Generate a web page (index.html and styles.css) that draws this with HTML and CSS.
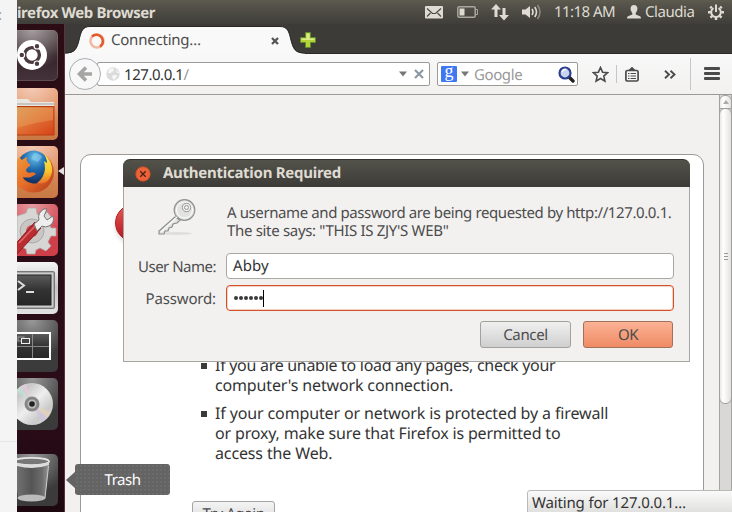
FILE: index.html
```
<!DOCTYPE html>
<html lang="en">
<head>
<meta charset="utf-8">
<title>Authentication Required</title>
<link rel="stylesheet" href="styles.css">
</head>
<body>
<div class="screen">
  <aside class="margin"><span class="colon">:</span></aside>

  <header class="panel">
    <span class="app-title"><span class="t t-title">irefox Web Browser</span></span>
    <svg class="i-mail" width="18" height="13" viewBox="0 0 18 13"><rect width="18" height="12.500" rx="1" fill="#dfdbd2"/><path d="M2 2.500l5.500 5h3l5.500-5M2 10.500l3.500-3.500M16 10.500l-3.500-3.500" fill="none" stroke="#4a4943" stroke-width="1.200"/></svg>
    <svg class="i-batt" width="21" height="12" viewBox="0 0 21 12"><rect x=".8" y=".8" width="17.400" height="10.400" rx="1.500" fill="none" stroke="#aaa79e" stroke-width="1.500"/><path d="M19 3.500h1.500v5H19" fill="none" stroke="#aaa79e"/><rect x="2.500" y="2.500" width="5" height="7" fill="#dfdbd2"/></svg>
    <svg class="i-net" width="18" height="17" viewBox="0 0 18 17"><path d="M5 0l5 5.500H6.500V13h-3V5.500H0z M13 16.500l-5-5.500h3.500V4h3v7H18z" fill="#dfdbd2"/></svg>
    <svg class="i-vol" width="20" height="16" viewBox="0 0 20 16"><path d="M0 5.500h3.500L8 2v12l-4.500-3.500H0z" fill="#dfdbd2"/><path d="M10 5q2 3 0 6M12.700 3q3.600 5 0 10" fill="none" stroke="#dfdbd2" stroke-width="1.600"/><path d="M15.500 1q5 7 0 14" fill="none" stroke="#8b887f" stroke-width="1.600"/></svg>
    <span class="clock"><span class="t t-clock">11:18 AM</span></span>
    <svg class="i-user" width="14" height="14" viewBox="0 0 14 14"><path d="M7 0c2.300 0 3.400 1.500 3.400 3.600 0 2-.8 3.400-1.700 4.400v1.500l4.300 1.700q1 .6 1 2.300H0q0-1.700 1-2.300l4.300-1.700V8C4.400 7 3.600 5.600 3.600 3.600 3.600 1.500 4.700 0 7 0z" fill="#dfdbd2"/></svg>
    <span class="user"><span class="t t-user">Claudia</span></span>
    <svg class="i-gear" width="16" height="16" viewBox="0 0 16 16"><path d="M5.500 4.100a4.800 4.800 0 1 0 5 0" fill="none" stroke="#dfdbd2" stroke-width="2"/><path d="M8 .5V8" stroke="#dfdbd2" stroke-width="2"/><path d="M3.800 4.200L2.300 2.700M12.200 4.200l1.500-1.500M2.800 8.300H0M13.200 8.300H16M4.300 11.900l-1.800 1.800M11.700 11.900l1.800 1.800M8 13v3" stroke="#dfdbd2" stroke-width="2.500"/></svg>
  </header>

  <nav class="launcher">
    <svg class="tile" viewBox="11 0 41 52">
      <defs>
        <radialGradient id="shine" cx=".5" cy="0" r=".75"><stop offset="0" stop-color="#fff" stop-opacity=".48"/><stop offset="1" stop-color="#fff" stop-opacity="0"/></radialGradient>
        <linearGradient id="dash" x2="0" y2="1"><stop offset="0" stop-color="#504346"/><stop offset=".5" stop-color="#35242a"/><stop offset="1" stop-color="#44333a"/></linearGradient>
        <linearGradient id="folder" x2="1" y2="1"><stop offset="0" stop-color="#d9a05b"/><stop offset=".5" stop-color="#e17236"/><stop offset="1" stop-color="#d64117"/></linearGradient>
        <linearGradient id="orange" x2="0" y2="1"><stop offset="0" stop-color="#e99a70"/><stop offset="1" stop-color="#c87843"/></linearGradient>
        <linearGradient id="term" x2="0" y2="1"><stop offset="0" stop-color="#f5f5f5"/><stop offset=".5" stop-color="#c6c6c6"/><stop offset="1" stop-color="#e3e3e3"/></linearGradient>
        <linearGradient id="black" x2="0" y2="1"><stop offset="0" stop-color="#5c5c5c"/><stop offset=".5" stop-color="#333"/><stop offset="1" stop-color="#262626"/></linearGradient>
        <radialGradient id="globe" cx=".5" cy=".2" r=".75"><stop offset="0" stop-color="#6cc0ea"/><stop offset=".5" stop-color="#1f6bb0"/><stop offset="1" stop-color="#153264"/></radialGradient>
        <linearGradient id="fox" x2="1" y2="1"><stop offset="0" stop-color="#f2a13c"/><stop offset=".5" stop-color="#e8702a"/><stop offset="1" stop-color="#b3391b"/></linearGradient>
        <linearGradient id="tail" x2="0" y2="1"><stop offset="0" stop-color="#f9ea55"/><stop offset=".6" stop-color="#f4c62c"/><stop offset="1" stop-color="#e8702a"/></linearGradient>
        <linearGradient id="disc" x2="1" y2="1"><stop offset="0" stop-color="#e8e0e4"/><stop offset=".25" stop-color="#c8c8c8"/><stop offset=".5" stop-color="#eee"/><stop offset=".75" stop-color="#c9c9c9"/><stop offset="1" stop-color="#ddd"/></linearGradient>
        <linearGradient id="glass" x2="1" y2="0"><stop offset="0" stop-color="#777"/><stop offset=".5" stop-color="#555"/><stop offset=".8" stop-color="#6c6c6c"/><stop offset="1" stop-color="#999"/></linearGradient>
      </defs>
      <rect x=".5" y=".5" width="51" height="50" rx="5" fill="url(#dash)" stroke="#5d4c51"/><rect width="52" height="52" rx="5" fill="url(#shine)"/>
      <circle cx="26" cy="25" r="15" fill="#fff"/><circle cx="26" cy="25" r="7.400" fill="none" stroke="#4b3a3f" stroke-width="3.400"/>
      <g fill="#4b3a3f" stroke="#fff" stroke-width="1.200"><circle cx="15.800" cy="25" r="2.800"/><circle cx="31" cy="16.200" r="2.800"/><circle cx="31" cy="33.800" r="2.800"/></g>
    </svg>
    <svg class="tile" viewBox="11 0 41 52"><rect width="52" height="52" rx="5" fill="url(#orange)"/><rect width="52" height="52" rx="5" fill="url(#shine)"/><path d="M5 43V11h17l3 3h23v5H5z" fill="#e9e5e1"/><path d="M5 15h43v2H5z" fill="#c9c5c1"/><path d="M4 18.500h44V47H4z" fill="url(#folder)" stroke="#b83c12"/><path d="M4 20h43v12Q25 35 4 42z" fill="#e9b16c" opacity=".35"/></svg>
    <svg class="tile" viewBox="11 0 41 52"><rect width="52" height="52" rx="5" fill="url(#orange)"/><rect width="52" height="52" rx="5" fill="url(#shine)"/><circle cx="27.500" cy="26" r="20.500" fill="url(#fox)"/><path d="M14 12Q20 4 29 4.500 40 6 43 18q1 10-5 16-6 5-13 3-7-2-8-6 3 1 8 0 4-2 5-3-2-3-7-1l-3-2q0-3 4-5 1-2-2-3-2-3-1-6-3 1-5 3z" fill="url(#globe)"/><path d="M28 7q5 0 8 4l-4 5-7-3z" fill="#8fd2ef" opacity=".55"/><path d="M37 7q10 8 9 19-2 9-8 11-5 1-7 0 7-5 8-14 0-4-1-8l3 2q0-5-4-10z" fill="url(#tail)"/></svg>
    <svg class="tile" viewBox="11 0 41 52"><rect width="52" height="52" rx="5" fill="#cf3f49"/><rect width="52" height="52" rx="5" fill="url(#shine)"/><path d="M22 4h8l1 6 5 2 5-4 5 6-3 5 2 5h5v8h-5l-3 6 3 4-5 5-6-3-4 2-1 4h-8l-1-5-9-4V12l9-3z" fill="#d8d6d4" stroke="#aaa" stroke-width=".7"/><circle cx="26" cy="27" r="12" fill="#c9c6c4" stroke="#aaa"/><circle cx="26" cy="27" r="6" fill="#c7505a"/><path d="M5 45l24-27 6 6L11 50z" fill="#b92c30" stroke="#8c1d22"/><path d="M13 39l17-18" stroke="#e0676a" stroke-width="1.500"/><path d="M28 20l5-4q-2-7 5-11l3 0-3 7 3 4 6-4q2 7-4 10-4 2-7 0l-5 5z" fill="#eee" stroke="#777"/></svg>
    <svg class="tile" viewBox="11 0 41 52"><rect width="52" height="52" rx="5" fill="url(#term)"/><rect x="4" y="9.500" width="44.500" height="37" rx="1.500" fill="#aaa" stroke="#777"/><rect x="5" y="11" width="42" height="34" fill="#ccc"/><rect x="6" y="13" width="39" height="30" fill="url(#black)" stroke="#222"/><path d="M12 19l6 4.500-6 4.500" fill="none" stroke="#ddd" stroke-width="2"/><path d="M20 30h8" stroke="#ddd" stroke-width="2"/></svg>
    <svg class="tile" viewBox="11 0 41 52"><rect width="52" height="52" rx="5" fill="#3b3b3b"/><rect width="52" height="52" rx="5" fill="url(#shine)"/><rect x="4" y="13" width="40" height="26" fill="url(#black)" stroke="#fff" stroke-width="2"/><path d="M26.500 14v24M5 26.500h38" stroke="#888"/><rect x="12" y="17" width="6" height="4" fill="none" stroke="#999"/><rect x="15.500" y="18.500" width="8" height="5" fill="#444" stroke="#eee"/></svg>
    <svg class="tile" viewBox="11 0 41 52"><rect width="52" height="52" rx="5" fill="#3b3b3b"/><rect width="52" height="52" rx="5" fill="url(#shine)"/><circle cx="26" cy="26" r="21" fill="url(#disc)"/><path d="M26 26L10 12l5-4z" fill="#bfe3d2" opacity=".7"/><path d="M26 26L15 8l5-2z" fill="#e9c8dc" opacity=".7"/><path d="M26 26l19 8-4 6z" fill="#e6d3b8" opacity=".7"/><path d="M26 26l15 14-5 4z" fill="#cdc3e2" opacity=".7"/><circle cx="26" cy="26" r="7.500" fill="#858585"/><circle cx="26" cy="26" r="4.500" fill="#bbb"/><circle cx="26" cy="26" r="2.800" fill="#222"/></svg>
    <svg class="tile tile-trash" viewBox="11 0 41 52"><rect width="52" height="52" rx="5" fill="#3b3b3b"/><rect width="52" height="52" rx="5" fill="url(#shine)"/><path d="M8 9h35l-4 35q-13 6-27 0z" fill="url(#glass)"/><ellipse cx="25.500" cy="44" rx="14" ry="3.500" fill="#bbb"/><path d="M42.500 12l-3.500 32" stroke="#ccc"/><ellipse cx="25.500" cy="7.500" rx="17.500" ry="3.600" fill="#777" stroke="#e4e4e4" stroke-width="1.700"/><path d="M8 8q17 6 35 0v3q-17 6-35 0z" fill="#ddd"/></svg>
  </nav>

  <main class="browser">
    <div class="tabs">
      <svg class="tab-edge" width="25" height="28" viewBox="0 0 25 28"><path d="M0 28V27.500C10 27.500 12 23 14 15S17 .5 25 .5V28z" fill="#f9f9f9"/><path d="M0 27C10 27 12 22 14 14S17 .5 25 .5" fill="none" stroke="#2a2926"/></svg>
      <div class="tab">
        <svg width="16" height="16" viewBox="0 0 16 16"><circle cx="8" cy="8" r="6.500" fill="none" stroke="#f3b9a0" stroke-width="2.600"/><path d="M3 3.500A6.500 6.500 0 1 1 11 13.700" fill="none" stroke="#e4582a" stroke-width="2.600"/></svg>
        <span class="tab-label"><span class="t t-tab">Connecting…</span></span>
        <svg width="8" height="8" viewBox="0 0 8 8"><path d="M1 1l6 6M7 1L1 7" stroke="#555" stroke-width="2.300"/></svg>
      </div>
      <svg class="tab-edge flip" width="25" height="28" viewBox="0 0 25 28"><path d="M0 28V27.500C10 27.500 12 23 14 15S17 .5 25 .5V28z" fill="#f9f9f9"/><path d="M0 27C10 27 12 22 14 14S17 .5 25 .5" fill="none" stroke="#2a2926"/></svg>
      <svg class="plus" width="16" height="16" viewBox="0 0 16 16"><path d="M5.500.5h5v5h5v5h-5v5h-5v-5h-5v-5h5z" fill="#b5d334" stroke="#5d8a2c"/><path d="M6.500 1.500h3v5h5v1.500h-13V6.500h5z" fill="#dcea8d"/></svg>
    </div>

    <div class="toolbar">
      <div class="back"><svg width="16" height="16" viewBox="0 0 16 16"><path d="M9 1.500L2.500 8 9 14.500M3 8h12" fill="none" stroke="#a5a5a3" stroke-width="3.600"/></svg></div>
      <div class="url">
        <svg width="14" height="14" viewBox="0 0 14 14"><circle cx="7" cy="7" r="6.700" fill="#dcdcdc"/><path d="M3 2l4-1 1 2-3 3-3 0zM7 8l4 0-1 3-2 2-2-3zM10 2l3 4-2 0z" fill="#f7f7f7"/></svg>
        <span class="url-text"><span class="t t-url">127.0.0.1<i>/</i></span></span>
        <svg class="drop" width="8" height="6" viewBox="0 0 8 6"><path d="M0 .5h8L4 5.500z" fill="#777"/></svg>
        <svg width="10" height="10" viewBox="0 0 10 10"><path d="M1 1l8 8M9 1L1 9" stroke="#8a97a3" stroke-width="2.100"/></svg>
      </div>
      <div class="search">
        <span class="g">g</span>
        <svg width="8" height="6" viewBox="0 0 8 6"><path d="M0 .5h8L4 5.500z" fill="#777"/></svg>
        <span class="search-text"><span class="t t-search">Google</span></span>
        <svg width="17" height="17" viewBox="0 0 17 17"><path d="M10.500 10.500l4.500 4.500" stroke="#222" stroke-width="3.400" stroke-linecap="round"/><circle cx="7" cy="7" r="5.500" fill="#c9d4f0" stroke="#2b3f8c" stroke-width="2.200"/><path d="M4 6q1-3 4-2.500" stroke="#fff" stroke-width="1.500" fill="none"/></svg>
      </div>
      <svg class="star" width="17" height="17" viewBox="0 0 17 17"><path d="M8.500 1.500l2.100 4.700 5 .5-3.800 3.400 1.100 5-4.400-2.600-4.400 2.600 1.100-5L1.400 6.700l5-.5z" fill="none" stroke="#4b4b4b" stroke-width="1.600"/></svg>
      <span class="sep"></span>
      <svg class="clip" width="14" height="15" viewBox="0 0 14 15"><rect x=".9" y="3.500" width="12.200" height="10.500" rx="1.500" fill="none" stroke="#4b4b4b" stroke-width="1.700"/><path d="M4 3.500L7 .5l3 3zM3 6.500h1.500M5.500 6.500H11M3 9h1.500M5.500 9H11M3 11.500h1.500M5.500 11.500H11" stroke="#4b4b4b" fill="#4b4b4b" stroke-width="1.100"/></svg>
      <svg class="more" width="12" height="9" viewBox="0 0 12 9"><path d="M1 .7l4 3.800-4 3.800M6.500.7l4 3.800-4 3.800" fill="none" stroke="#4b4b4b" stroke-width="1.900"/></svg>
      <span class="sep tall"></span>
      <span class="burger"><b></b><b></b><b></b></span>
    </div>

    <div class="viewport">
      <section class="page">
        <ul>
          <li><span class="t t-a1">If you are unable to load any pages, check your</span><br><span class="t t-a2">computer's network connection.</span></li>
          <li><span class="t t-b1">If your computer or network is protected by a firewall</span><br><span class="t t-b2">or proxy, make sure that Firefox is permitted to</span><br><span class="t t-b3">access the Web.</span></li>
        </ul>
        <button class="retry"><span class="t t-retry">Try Again</span></button>
      </section>
      <div class="scrollbar">
        <div class="up"><svg width="6" height="4" viewBox="0 0 6 4"><path d="M3 0l3 4H0z" fill="#aaa"/></svg></div>
        <div class="thumb"><b></b><b></b><b></b></div>
      </div>
    </div>
  </main>

  <svg class="marker" width="6" height="8" viewBox="0 0 6 8"><path d="M6 0v8L0 4z" fill="#e6dfe1"/></svg>
  <span class="alert"></span>

  <div class="tooltip"><svg width="10" height="18" viewBox="0 0 10 18"><path d="M10 0v18L0 9z" fill="#636363"/></svg><div><span class="t t-trash">Trash</span></div></div>
  <div class="status"><span class="t t-status">Waiting for 127.0.0.1…</span></div>

  <form class="dialog">
    <div class="titlebar">
      <svg width="16" height="16" viewBox="0 0 16 16"><circle cx="8" cy="8" r="7.300" fill="#ec6239" stroke="#c44a22" stroke-width=".8"/><path d="M5.300 5.300l5.400 5.400M10.700 5.300l-5.400 5.400" stroke="#4a2012" stroke-width="1.300"/></svg>
      <span class="t t-auth">Authentication Required</span>
    </div>
    <div class="content">
      <div class="message">
        <svg width="40" height="38" viewBox="0 0 40 38"><ellipse cx="20" cy="35.500" rx="15" ry="1.500" fill="#dedddc"/><path d="M18 19L2 33l0 3 5 0 1-3 3 0 1-3 3-1 1-3 4-1 3-3z" fill="#e4e5e2" stroke="#8d8f89" stroke-width="1.200"/><circle cx="27.500" cy="12" r="10.300" fill="#e2e3e0" stroke="#92948e" stroke-width="1.200"/><circle cx="27.500" cy="12" r="8" fill="none" stroke="#fff"/><circle cx="29.500" cy="9.500" r="4.200" fill="#f1f1ef" stroke="#969892"/><circle cx="29.500" cy="9.500" r="2" fill="none" stroke="#969892"/><path d="M4 34l16-15" stroke="#fafafa" stroke-width="1.300"/></svg>
        <p><span class="t t-m1">A username and password are being requested by http://127.0.0.1.</span><br><span class="t t-m2">The site says: "THIS IS ZJY'S WEB"</span></p>
      </div>
      <div class="field"><label><span class="t t-un">User Name:</span></label><div class="box"><span class="t t-abby">Abby</span></div></div>
      <div class="field"><label><span class="t t-pw">Password:</span></label><div class="box focus"><span class="dots"><b></b><b></b><b></b><b></b><b></b><b></b></span><span class="caret"></span></div></div>
      <div class="actions"><button type="button"><span class="t t-cancel">Cancel</span></button><button type="button" class="ok"><span class="t t-ok">OK</span></button></div>
    </div>
  </form>
</div>
</body>
</html>
```

FILE: styles.css
```
* { box-sizing: border-box; }

body {
  margin: 0;
  font: 15px/18px "Noto Sans", "Open Sans", sans-serif;
  color: #4c4c4c;
}

p, ul { margin: 0; padding: 0; list-style: none; }
svg { display: block; flex: none; }

/* tracking per text run */
.t { white-space: pre; text-rendering: geometricPrecision; }
.t-title { letter-spacing: -.4px; }
.t-clock { letter-spacing: -.55px; }
.t-user { letter-spacing: -.43px; }
.t-tab { letter-spacing: -.22px; }
.t-url { letter-spacing: -.45px; }
.t-search { letter-spacing: -.4px; }
.t-a1 { letter-spacing: -.29px; }
.t-a2, .t-pw, .t-status { letter-spacing: -.155px; }
.t-b1, .t-b3 { letter-spacing: -.13px; }
.t-b2 { letter-spacing: -.165px; }
.t-retry { letter-spacing: -.4px; }
.t-auth { letter-spacing: -.27px; }
.t-m1 { letter-spacing: -.4px; }
.t-m2 { letter-spacing: -.32px; }
.t-un { letter-spacing: -.5px; }
.t-abby { letter-spacing: .1px; }
.t-trash { letter-spacing: -.5px; }
.t-cancel { letter-spacing: -.37px; }
.t-ok { letter-spacing: -.5px; }

.screen {
  position: relative;
  display: grid;
  grid-template: 24px 488px / 17px 48px 667px;
  width: 732px;
  height: 512px;
  overflow: hidden;
  background: #f2f1f0;
}

/* left margin */
.margin {
  grid-row: 1 / 3;
  height: 442px;
  background: #f4f4f4;
  border-bottom: 1px solid #e6e6e6;
  box-shadow: 0 80px #f4f4f4;
}
.colon { display: block; margin-top: 5px; margin-left: -2px; color: #999; }

/* top panel */
.panel {
  grid-column: 2 / 4;
  display: flex;
  align-items: center;
  background: linear-gradient(#5d5a4f, #4f4d45 40%, #3f3e3a);
  color: #dfdbd2;
}
.app-title { width: 408px; font-weight: 700; }
.i-batt { margin-left: 14px; }
.i-net { margin-left: 13px; }
.i-vol { margin-left: 13px; }
.clock { width: 73px; margin: -1px 0 0 12px; }
.user { width: 63px; margin: -1px 0 0 4px; }

/* launcher */
.launcher {
  grid-column: 2;
  display: flex;
  flex-direction: column;
  gap: 6px;
  padding-top: 6px;
  background: linear-gradient(#2c0d15, #2a0c18 80%, #1e0810);
  border-right: 1px solid #5d3146;
}
.tile { width: 41px; height: 52px; }
.tile-trash { margin-top: 18px; }

/* browser */
.browser {
  grid-column: 3;
  display: flex;
  flex-direction: column;
  min-width: 0;
}
.tabs {
  display: flex;
  height: 30px;
  padding-top: 2px;
  background: #3c3b37;
  border-bottom: 1px solid #2a2926;
}
.tab {
  display: flex;
  align-items: center;
  width: 190px;
  height: 28px;
  background: #f9f9f9;
  border-top: 1px solid #2a2926;
}
.tab svg:first-child { margin-left: -1px; }
.tab-label { width: 160px; margin: -2px 0 0 6px; }
.flip { transform: scaleX(-1); }
.plus { margin: 6px 0 0 -5px; }

.toolbar {
  display: flex;
  align-items: center;
  height: 41px;
  background: linear-gradient(#f8f8f8, #f2f1f0);
  border-bottom: 1px solid #9b9a98;
}
.back {
  z-index: 1;
  display: grid;
  place-items: center;
  flex: none;
  width: 32px;
  height: 32px;
  margin-left: 4px;
  background: #f8f8f8;
  border: 1px solid #a9aeb4;
  border-radius: 50%;
}
.url, .search {
  display: flex;
  align-items: center;
  height: 24px;
  background: #fff;
  border: 1px solid #9b9a98;
  border-radius: 2px;
}
.url { width: 333px; margin-left: -4px; padding-left: 8px; }
.url-text { width: 275px; margin-left: 4px; color: #333; }
.url-text i { font-style: normal; color: #999; }
.drop { margin-right: 7px; }
.search { width: 141px; margin-left: 7px; padding-left: 3px; }
.g {
  width: 16px;
  height: 16px;
  margin-right: 4px;
  background: #4078f2;
  border-radius: 1px;
  color: #fff;
  font: 18px/11px "Liberation Serif", serif;
  text-align: center;
}
.search-text { width: 79px; margin-left: 5px; color: #999; }
.search svg:last-child { margin-left: 5px; }
.star { margin-left: 14px; }
.sep { width: 1px; height: 18px; margin-left: 7px; background: #c3c6cb; }
.tall { height: 32px; margin-left: 14px; }
.clip { margin-left: 8px; }
.more { margin-left: 25px; }
.burger { display: grid; gap: 2px; margin: -2px 0 0 13px; }
.burger b { width: 16px; height: 3px; background: #4b4b4b; border-radius: 1px; }

.viewport {
  display: flex;
  justify-content: space-between;
  flex: 1;
  min-height: 0;
  overflow: hidden;
}
.page {
  width: 624px;
  height: 400px;
  margin: 59px 0 0 15px;
  padding: 200px 0 0 111px;
  background: #fff;
  border: 1px solid #9b9a98;
  border-radius: 11px;
  color: #333;
  font-size: 16px;
  line-height: 20px;
}
li { padding-left: 23px; margin-bottom: 8px; background: linear-gradient(#3a3a3a, #3a3a3a) 9px 8px / 6px 6px no-repeat; }
.retry {
  display: block;
  width: 83px;
  height: 24px;
  margin-top: 38px;
  padding: 0;
  background: linear-gradient(#f4f4f4, #d8d8d8);
  border: 1px solid #a5a5a5;
  border-radius: 3px;
  font: 15px/20px "Noto Sans", sans-serif;
  color: #4c4c4c;
}
.scrollbar { width: 13px; background: #d9d8d6; border: solid #a5a4a2; border-width: 0 1px; }
.up, .thumb {
  display: flex;
  flex-direction: column;
  align-items: center;
  justify-content: center;
  border: 1px solid #a0a09e;
  border-radius: 6px;
  margin: 0 -1px;
  background: linear-gradient(90deg, #e8e8e6, #fff 30%, #e2e1df);
}
.up { height: 14px; border-radius: 6px 6px 0 0; }
.thumb { height: 296px; gap: 2px; margin-top: -1px; }
.thumb b { width: 4px; height: 1px; background: #999; }

/* overlays */
.marker { position: absolute; left: 58px; top: 167px; }
.alert {
  position: absolute;
  left: 115px;
  top: 204px;
  width: 38px;
  height: 38px;
  border-radius: 50%;
  background: linear-gradient(#ea5a55, #b3131f);
  border: 1px solid #b01c22;
  box-shadow: 0 3px 4px #0002;
}
.tooltip {
  position: absolute;
  left: 66px;
  top: 464px;
  display: flex;
  align-items: center;
  color: #fff;
}
.tooltip svg { margin-right: -1px; }
.tooltip div {
  width: 95px;
  height: 31px;
  line-height: 31px;
  text-align: center;
  border-radius: 3px;
  background: radial-gradient(circle, #707070 .6px, #646464 .9px) 0 0 / 4px 4px;
}
.status {
  position: absolute;
  left: 527px;
  top: 490px;
  width: 206px;
  height: 23px;
  padding-left: 4px;
  line-height: 22px;
  color: #333;
  background: linear-gradient(#fafafa, #e0e0de);
  border: 1px solid #b9b9b7;
  border-radius: 3px 0 0;
}

/* dialog */
.dialog {
  position: absolute;
  left: 123px;
  top: 159px;
  width: 567px;
  height: 203px;
}
.titlebar {
  display: flex;
  align-items: center;
  height: 28px;
  padding-left: 12px;
  background: linear-gradient(#53524a, #3c3b37);
  border-top: 1px solid #33322e;
  border-radius: 7px 7px 0 0;
  color: #dfdbd2;
  font-weight: 700;
}
.titlebar svg { margin-right: 12px; }
.titlebar .t { margin-top: -2px; }
.content {
  height: 175px;
  padding: 11px 15px 0 14px;
  background: #f2f1f0;
  border: 1px solid #a6a5a2;
  border-top: 0;
}
.message { display: flex; height: 55px; line-height: 17px; }
.message svg { margin-left: 19px; }
.message p { margin: 6px 0 0 30px; }
.field { display: flex; align-items: center; height: 26px; margin-bottom: 6px; }
.field label { width: 78px; margin-right: 10px; text-align: right; }
.box {
  display: flex;
  align-items: center;
  width: 448px;
  height: 26px;
  padding-left: 6px;
  background: #fff;
  border: 1px solid #a9a8a5;
  border-radius: 4px;
  color: #333;
}
.focus { border-color: #d1522a; box-shadow: inset 0 0 0 1px #f6d2c5; }
.dots { display: flex; gap: 1px; padding-left: 1px; }
.dots b { width: 4px; height: 4px; border-radius: 50%; background: #3a3a3a; }
.caret { width: 1px; height: 17px; background: #000; }
.actions { display: flex; justify-content: flex-end; gap: 12px; margin-top: 10px; padding-right: 1px; }
.actions button {
  width: 91px;
  height: 27px;
  padding: 0;
  font: 15px/18px "Noto Sans", sans-serif;
  color: #4c4c4c;
  background: linear-gradient(#f0f0f0, #cfcfcf);
  border: 1px solid #a3a19e;
  border-radius: 3px;
}
.actions .ok { width: 90px; background: linear-gradient(#fbb295, #ef8b65); border-color: #a3705c; }
```
